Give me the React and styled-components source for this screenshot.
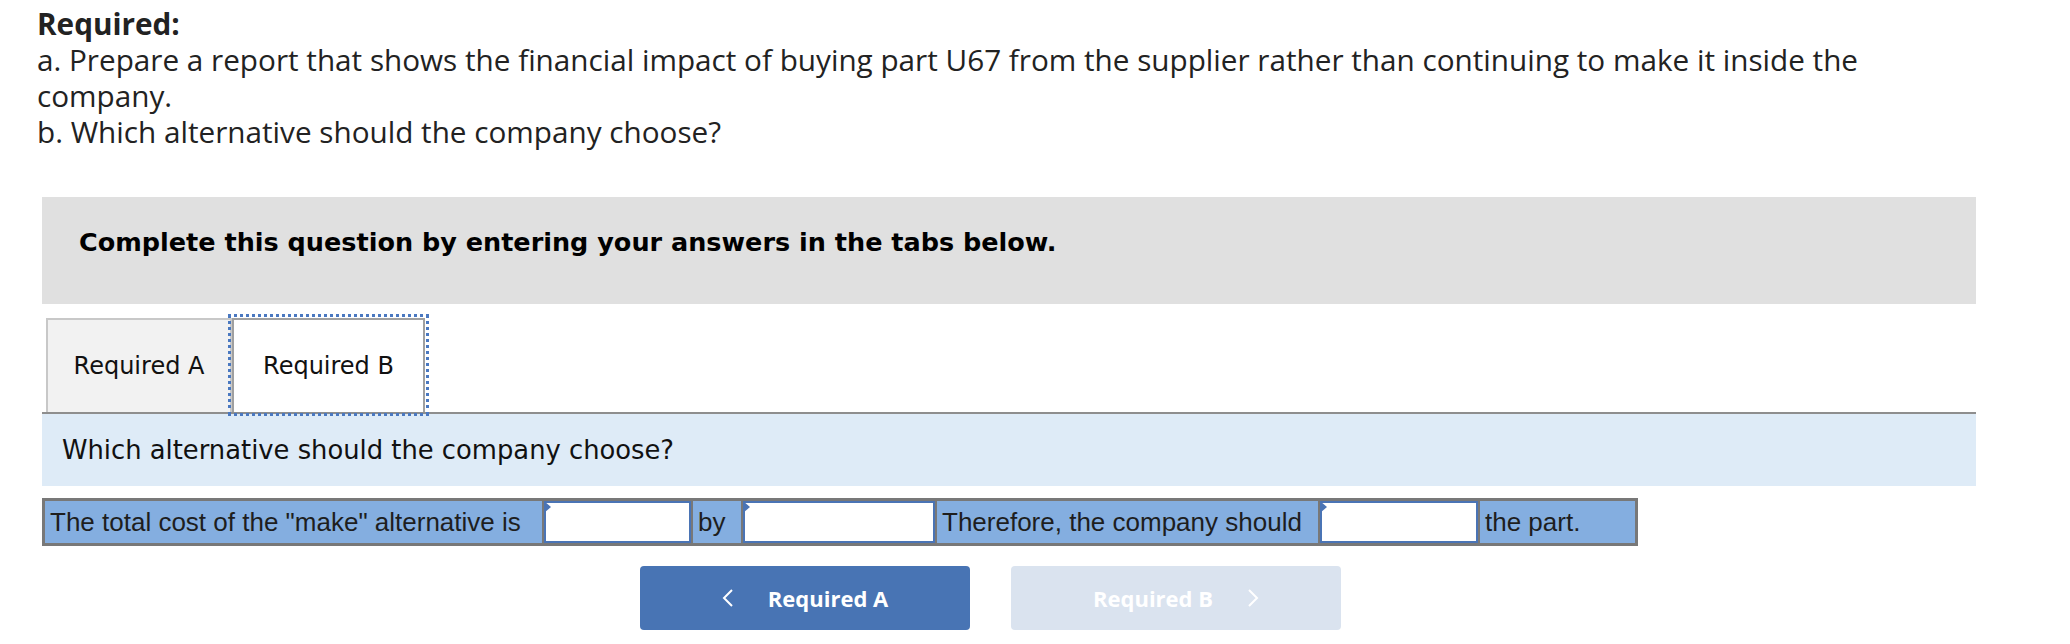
import styled, { createGlobalStyle } from 'styled-components';

const GlobalStyle = createGlobalStyle`
  body {
    margin: 0;
    background: #ffffff;
    color: #222222;
  }
`

const Page = styled.div`
  width: 2070px;
  padding-top: 6px;
`

const Header = styled.div`
  padding-left: 37px;
  width: 1900px;
  font-family: "Open Sans", "Liberation Sans", sans-serif;
  font-size: 29.7px;
  line-height: 36px;
  color: #222222;
`

const HeaderTitle = styled.div`
  font-weight: 700;
`

const Main = styled.div`
  margin-left: 42px;
  width: 1934px;
  margin-top: 47px;
`

const Banner = styled.div`
  height: 107px;
  box-sizing: border-box;
  background: #e0e0e0;
  padding: 30px 0 0 37px;
  font-family: "DejaVu Sans", Verdana, sans-serif;
  font-weight: 700;
  font-size: 25.5px;
  line-height: 30px;
  color: #000000;
`

const TabBar = styled.div`
  display: flex;
  margin-top: 14px;
  padding-left: 4px;
  border-bottom: 2px solid #8e8e8e;
`

const Tab = styled.div`
  display: flex;
  align-items: center;
  justify-content: center;
  box-sizing: border-box;
  width: ${p => p.$width}px;
  height: 94px;
  font-family: "DejaVu Sans", Verdana, sans-serif;
  font-size: 24px;
  color: #111111;
  background: ${p => (p.$active ? '#ffffff' : '#f2f2f2')};
  border: 2px solid ${p => (p.$active ? '#a0a0a0' : '#c8c8c8')};
  border-bottom: none;
  outline: ${p => (p.$active ? '3px dotted #4a78c0' : 'none')};
  outline-offset: 1px;
`

const Prompt = styled.div`
  height: 72px;
  display: flex;
  align-items: center;
  padding-left: 20px;
  background: #deebf7;
  font-family: "DejaVu Sans", Verdana, sans-serif;
  font-size: 25.8px;
  color: #111111;
`

const AnswerRow = styled.div`
  display: flex;
  width: 1596px;
  height: 48px;
  box-sizing: border-box;
  margin-top: 12px;
  border: 3px solid #787878;
  background: #84aee0;
`

const Cell = styled.div`
  position: relative;
  box-sizing: border-box;
  width: ${p => p.$width}px;
  display: flex;
  align-items: center;
  padding-left: ${p => (p.$input ? 0 : 5)}px;
  border-right: ${p => (p.$last ? 'none' : '2px solid #787878')};
  font-family: "Liberation Sans", Arial, sans-serif;
  font-size: 26px;
  color: #1e1e1e;
  white-space: nowrap;

  ${p => p.$input && `
    &::before {
      content: "";
      position: absolute;
      left: 0;
      top: 0;
      border-top: 6px solid transparent;
      border-bottom: 6px solid transparent;
      border-left: 7px solid #4a74b5;
    }
  `}
`

const Field = styled.input`
  width: 100%;
  height: 100%;
  box-sizing: border-box;
  margin: 0;
  border: 2px solid #4a74b5;
  background: #ffffff;
  outline: none;
`

const Nav = styled.div`
  display: flex;
  gap: 41px;
  margin-top: 20px;
  margin-left: 598px;
`

const NavButton = styled.button`
  width: 330px;
  height: 64px;
  display: flex;
  align-items: center;
  justify-content: center;
  gap: 34px;
  border: none;
  border-radius: 4px;
  background: ${p => (p.$disabled ? '#dae3ef' : '#4874b4')};
  color: #ffffff;
  font-family: "Open Sans", "Liberation Sans", sans-serif;
  font-weight: 700;
  font-size: 22px;
  cursor: pointer;
`

const Chevron = ({ dir }) => (
  <svg width="12" height="20" viewBox="0 0 12 20">
    <polyline
      points={dir === 'left' ? '10,2 2,10 10,18' : '2,2 10,10 2,18'}
      fill="none"
      stroke="#ffffff"
      strokeWidth="2"
    />
  </svg>
)

const App = () => {
  return (
    <Page>
      <GlobalStyle />
      <Header>
        <HeaderTitle>Required:</HeaderTitle>
        <div>a. Prepare a report that shows the financial impact of buying part U67 from the supplier rather than continuing to make it inside the company.</div>
        <div>b. Which alternative should the company choose?</div>
      </Header>
      <Main>
        <Banner>Complete this question by entering your answers in the tabs below.</Banner>
        <TabBar>
          <Tab $width={186}>Required A</Tab>
          <Tab $width={193} $active>Required B</Tab>
        </TabBar>
        <Prompt>Which alternative should the company choose?</Prompt>
        <AnswerRow>
          <Cell $width={499}>The total cost of the "make" alternative is</Cell>
          <Cell $width={149} $input><Field type="text" /></Cell>
          <Cell $width={50}>by</Cell>
          <Cell $width={194} $input><Field type="text" /></Cell>
          <Cell $width={383}>Therefore, the company should</Cell>
          <Cell $width={160} $input><Field type="text" /></Cell>
          <Cell $width={155} $last>the part.</Cell>
        </AnswerRow>
        <Nav>
          <NavButton>
            <Chevron dir="left" />
            <span>Required A</span>
          </NavButton>
          <NavButton $disabled>
            <span>Required B</span>
            <Chevron dir="right" />
          </NavButton>
        </Nav>
      </Main>
    </Page>
  );
};

export default App;
